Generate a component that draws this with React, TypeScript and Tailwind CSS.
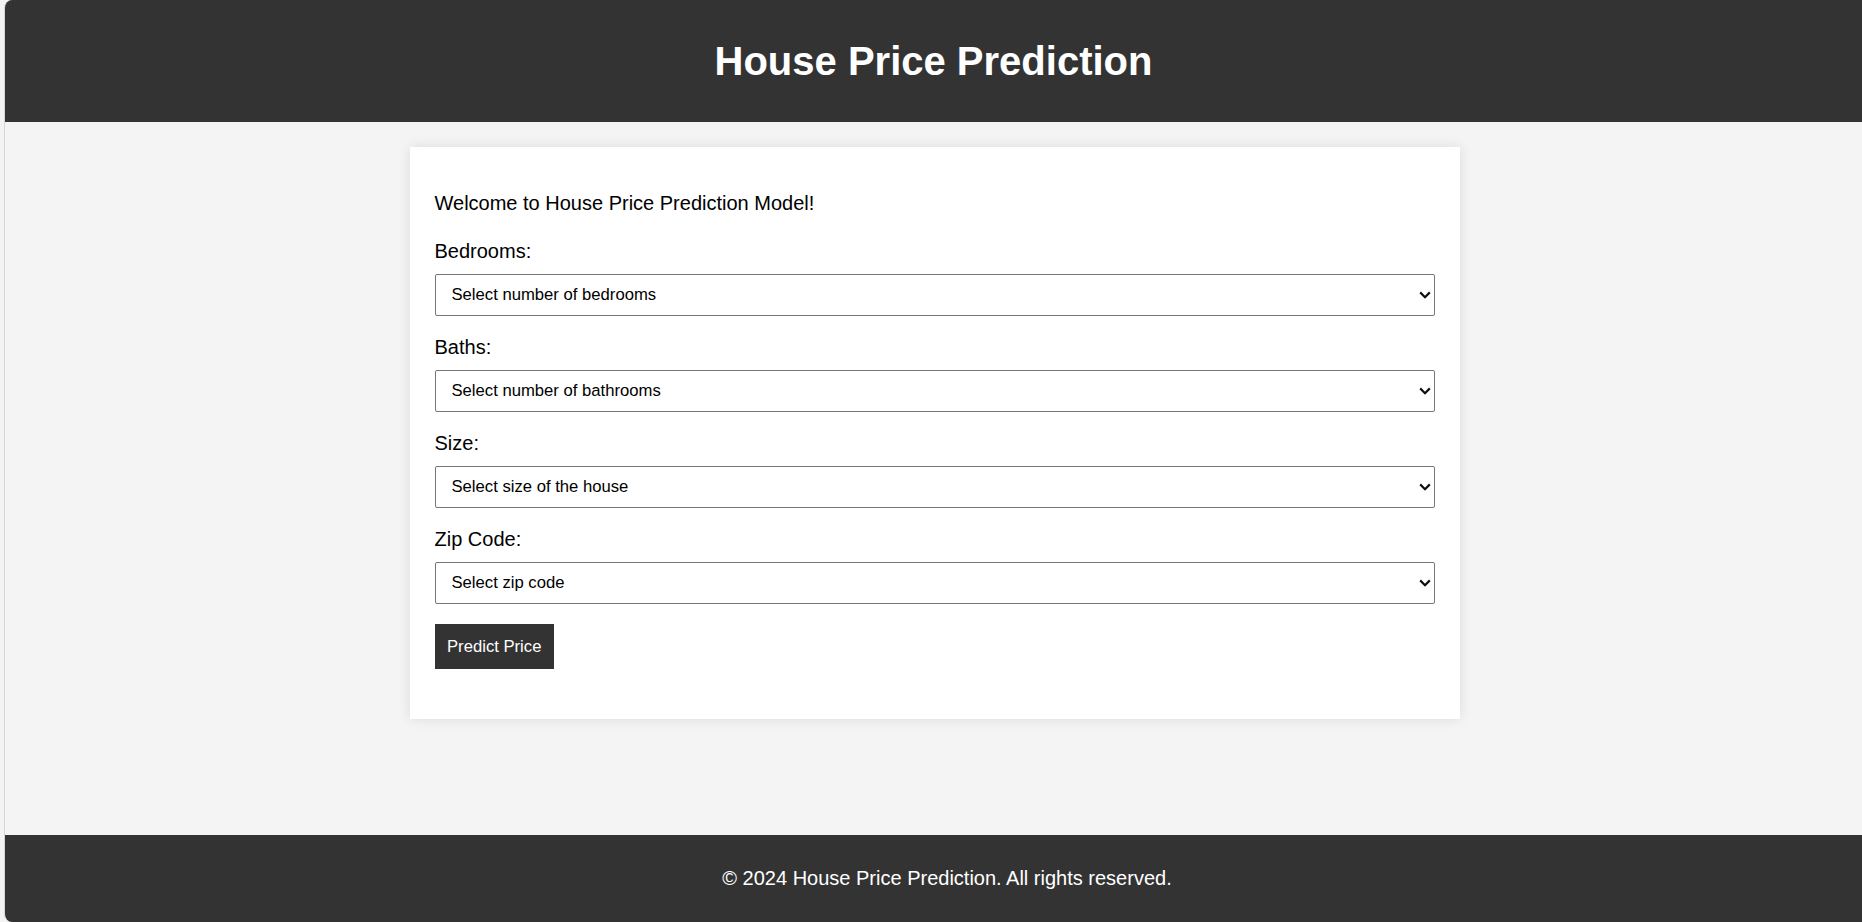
import { useState } from 'react';

const fields = [
  { label: 'Bedrooms:', placeholder: 'Select number of bedrooms', options: ['1', '2', '3', '4', '5'] },
  { label: 'Baths:', placeholder: 'Select number of bathrooms', options: ['1', '2', '3', '4'] },
  { label: 'Size:', placeholder: 'Select size of the house', options: ['1000', '1500', '2000', '2500', '3000'] },
  { label: 'Zip Code:', placeholder: 'Select zip code', options: ['10001', '10002', '10003'] },
];

function Chevron() {
  return (
    <svg
      className="pointer-events-none absolute right-[4px] top-1/2 -translate-y-1/2"
      width="12"
      height="8"
      viewBox="0 0 12 8"
      fill="none"
    >
      <path d="M1.2 1.4 6 6.2l4.8-4.8" stroke="#111" strokeWidth="2.2" />
    </svg>
  );
}

export default function App() {
  const [values, setValues] = useState<string[]>(['', '', '', '']);

  return (
    <div className="flex h-screen bg-[#f3f3f3] font-['Liberation_Sans',Arial,sans-serif] text-black">
      <div className="ml-[4px] flex flex-1 flex-col overflow-hidden rounded-l-[8px] border-l border-[#d6d6d6]">
        <header className="flex h-[122px] shrink-0 items-center justify-center bg-[#333333]">
          <h1 className="text-[40px] font-bold leading-[46px] text-white">House Price Prediction</h1>
        </header>

        <main className="flex-1 bg-[#f4f4f4] pt-[25px] pl-[2px]">
          <div className="mx-auto w-[1050px] bg-white px-[25px] pt-[45px] pb-[50px] shadow-[0_0_12px_rgba(0,0,0,0.1)]">
            <p className="text-[20px] leading-[23px]">Welcome to House Price Prediction Model!</p>

            <form className="mt-[25px]" onSubmit={(e) => e.preventDefault()}>
              {fields.map((f, i) => (
                <div key={f.label} className="mb-[20px]">
                  <label className="block text-[20px] leading-[23px]">{f.label}</label>
                  <div className="relative mt-[11px]">
                    <select
                      value={values[i]}
                      onChange={(e) => {
                        const next = [...values];
                        next[i] = e.target.value;
                        setValues(next);
                      }}
                      className="block h-[42px] w-full appearance-none rounded-[2px] border border-[#767676] bg-white pl-[16px] pr-[24px] text-[16.67px] leading-[20px] text-black outline-none"
                    >
                      <option value="">{f.placeholder}</option>
                      {f.options.map((o) => (
                        <option key={o} value={o}>
                          {o}
                        </option>
                      ))}
                    </select>
                    <Chevron />
                  </div>
                </div>
              ))}

              <button
                type="submit"
                className="mt-[1px] flex h-[45px] items-center bg-[#333333] px-[12.5px] text-[16.67px] leading-[20px] text-white"
              >
                Predict Price
              </button>
            </form>
          </div>
        </main>

        <footer className="flex h-[87px] shrink-0 items-center justify-center bg-[#333333] pl-[27px]">
          <p className="text-[20px] leading-[23px] text-white">© 2024 House Price Prediction. All rights reserved.</p>
        </footer>
      </div>
    </div>
  );
}
